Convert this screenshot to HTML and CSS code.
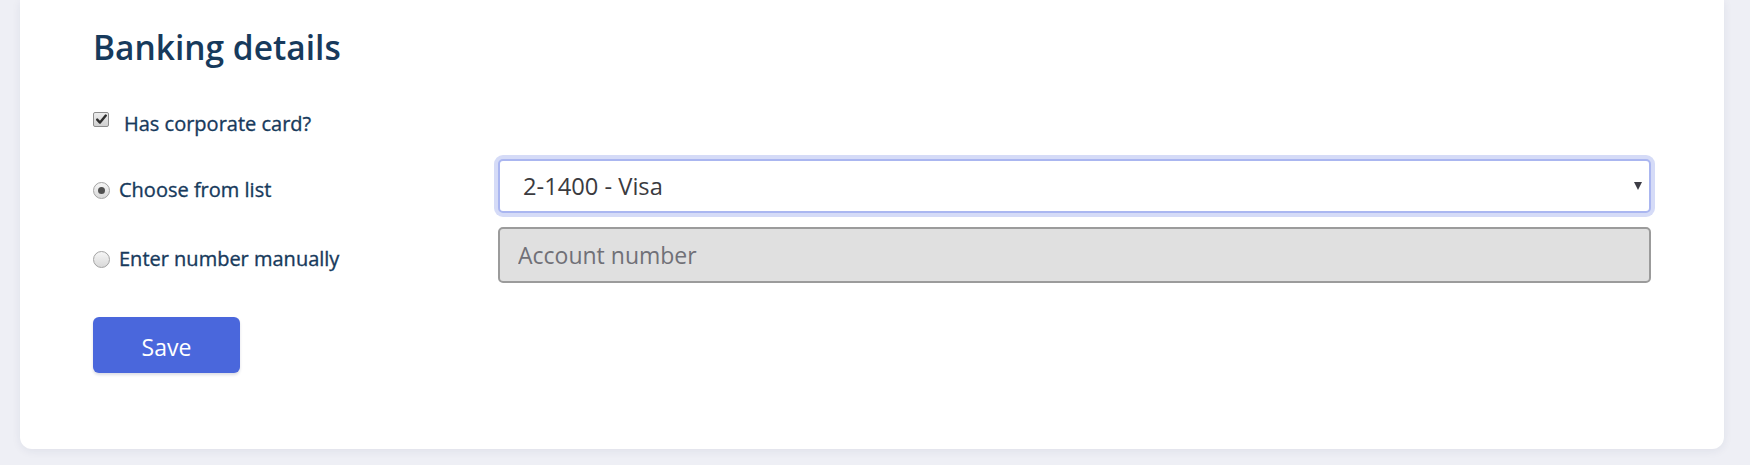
FILE: index.html
```html
<!DOCTYPE html>
<html lang="en">
<head>
<meta charset="utf-8">
<title>Banking details</title>
<link rel="stylesheet" href="styles.css">
</head>
<body>
<div class="page">
  <section class="card">
    <h2 class="title">Banking details</h2>

    <label class="check-row">
      <span class="checkbox">
        <svg viewBox="0 0 15 15" width="15" height="15" aria-hidden="true">
          <path d="M3.2 7.6 L6 10.6 L11.8 3.6" fill="none" stroke="#2e2e2e" stroke-width="2.4" stroke-linecap="round" stroke-linejoin="round"/>
        </svg>
      </span>
      <span class="check-label">Has corporate card?</span>
    </label>

    <div class="field-row row-select">
      <label class="choice"><span class="radio radio-on"></span>Choose from list</label>
      <div class="select-wrap">
        <select class="select">
          <option>2-1400 - Visa</option>
        </select>
      </div>
    </div>

    <div class="field-row row-input">
      <label class="choice"><span class="radio"></span>Enter number manually</label>
      <input class="text-input" type="text" placeholder="Account number" disabled>
    </div>

    <button class="btn" type="button">Save</button>
  </section>
</div>
</body>
</html>
```

FILE: styles.css
```css
* { box-sizing: border-box; }

html, body {
  margin: 0;
  padding: 0;
  background: #eeeff5;
  font-family: "Open Sans", "Noto Sans", sans-serif;
}

.page {
  padding: 0 26px 16px 20px;
}

.card {
  background: #ffffff;
  border-radius: 0 0 12px 12px;
  box-shadow: 0 2px 10px rgba(30, 40, 80, 0.07);
  padding: 0 73px 76px 73px;
  display: flex;
  flex-direction: column;
  align-items: stretch;
}

.title {
  margin: 26px 0 0 0;
  height: 42px;
  line-height: 42px;
  font-size: 33.5px;
  font-weight: 600;
  color: #173a5c;
}

.check-row {
  margin-top: 42px;
  display: flex;
  align-items: center;
  height: 28px;
}

.checkbox {
  width: 16px;
  height: 15px;
  border: 1px solid #8d8d8d;
  border-radius: 2px;
  background: linear-gradient(#ececec, #d0d0d0);
  display: flex;
  align-items: center;
  justify-content: center;
  margin-top: -9px;
  flex: none;
}

.checkbox svg { display: block; margin: -1px; }

.check-label {
  margin-left: 15px;
  font-size: 20px;
  line-height: 28px;
  font-weight: 400;
  -webkit-text-stroke: 0.35px #173a5c;
  color: #173a5c;
}

.field-row {
  display: grid;
  grid-template-columns: 405px 1fr;
  align-items: center;
}

.row-select { margin-top: 21px; }
.row-input { margin-top: 14px; }

.choice {
  display: flex;
  align-items: center;
  padding-top: 8px;
  font-size: 20px;
  line-height: 28px;
  font-weight: 400;
  -webkit-text-stroke: 0.35px #173a5c;
  color: #173a5c;
}

.radio {
  width: 17px;
  height: 17px;
  border-radius: 50%;
  border: 1px solid #a3a3a3;
  background: linear-gradient(#f6f6f6, #d9d9d9);
  margin-right: 9px;
  display: flex;
  align-items: center;
  justify-content: center;
  flex: none;
  -webkit-text-stroke: 0;
}

.radio-on::after {
  content: "";
  width: 7px;
  height: 7px;
  border-radius: 50%;
  background: #505050;
}

.select-wrap {
  position: relative;
}

.select-wrap::after {
  content: "";
  position: absolute;
  right: 9px;
  top: 23px;
  width: 0;
  height: 0;
  border-left: 4.5px solid transparent;
  border-right: 4.5px solid transparent;
  border-top: 8px solid #3d3d45;
  pointer-events: none;
}

.select {
  -webkit-appearance: none;
  appearance: none;
  width: 100%;
  height: 54px;
  border: 2px solid #aab6f0;
  border-radius: 5px;
  box-shadow: 0 0 0 4px #d5dbf7;
  background: #ffffff;
  padding: 0 40px 0 23px;
  font-family: "Open Sans", "Noto Sans", sans-serif;
  font-size: 23.7px;
  color: #3b3b3f;
  outline: none;
}

.text-input {
  width: 100%;
  height: 56px;
  border: 2px solid #9b9b9b;
  border-radius: 5px;
  background: #e0e0e0;
  padding: 0 18px;
  font-family: "Open Sans", "Noto Sans", sans-serif;
  font-size: 23px;
  color: #3b3b3f;
}

.text-input::placeholder {
  color: #707077;
  opacity: 1;
}

.btn {
  align-self: flex-start;
  margin-top: 34px;
  width: 147px;
  height: 56px;
  border: none;
  border-radius: 6px;
  background: #4a67dc;
  box-shadow: 0 2px 3px rgba(20, 30, 80, 0.15);
  color: #ffffff;
  font-family: "Open Sans", "Noto Sans", sans-serif;
  font-size: 23px;
  padding: 3px 0 0 0;
  cursor: pointer;
}
```
